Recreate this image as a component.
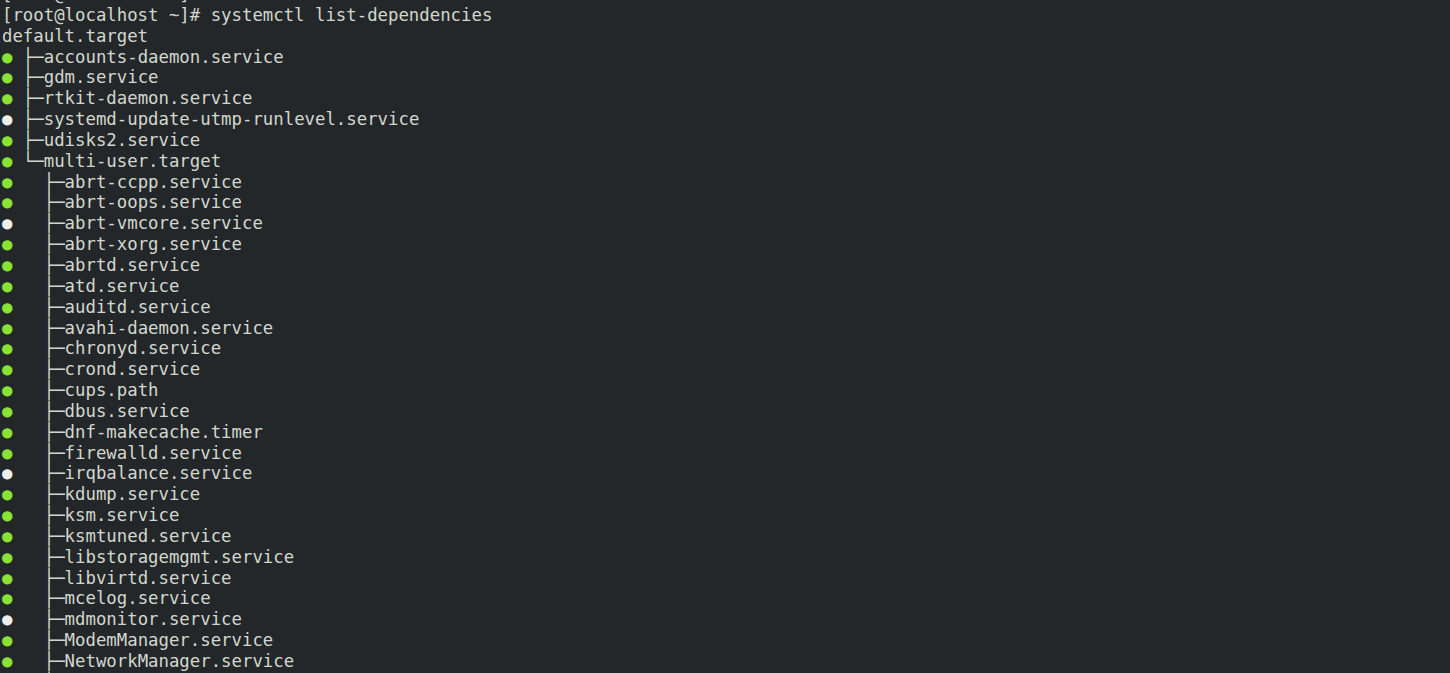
const units: { name: string; ok: boolean; depth: 1 | 2; last?: boolean }[] = [
  { name: "accounts-daemon.service", ok: true, depth: 1 },
  { name: "gdm.service", ok: true, depth: 1 },
  { name: "rtkit-daemon.service", ok: true, depth: 1 },
  { name: "systemd-update-utmp-runlevel.service", ok: false, depth: 1 },
  { name: "udisks2.service", ok: true, depth: 1 },
  { name: "multi-user.target", ok: true, depth: 1, last: true },
  { name: "abrt-ccpp.service", ok: true, depth: 2 },
  { name: "abrt-oops.service", ok: true, depth: 2 },
  { name: "abrt-vmcore.service", ok: false, depth: 2 },
  { name: "abrt-xorg.service", ok: true, depth: 2 },
  { name: "abrtd.service", ok: true, depth: 2 },
  { name: "atd.service", ok: true, depth: 2 },
  { name: "auditd.service", ok: true, depth: 2 },
  { name: "avahi-daemon.service", ok: true, depth: 2 },
  { name: "chronyd.service", ok: true, depth: 2 },
  { name: "crond.service", ok: true, depth: 2 },
  { name: "cups.path", ok: true, depth: 2 },
  { name: "dbus.service", ok: true, depth: 2 },
  { name: "dnf-makecache.timer", ok: true, depth: 2 },
  { name: "firewalld.service", ok: true, depth: 2 },
  { name: "irqbalance.service", ok: false, depth: 2 },
  { name: "kdump.service", ok: true, depth: 2 },
  { name: "ksm.service", ok: true, depth: 2 },
  { name: "ksmtuned.service", ok: true, depth: 2 },
  { name: "libstoragemgmt.service", ok: true, depth: 2 },
  { name: "libvirtd.service", ok: true, depth: 2 },
  { name: "mcelog.service", ok: true, depth: 2 },
  { name: "mdmonitor.service", ok: false, depth: 2 },
  { name: "ModemManager.service", ok: true, depth: 2 },
  { name: "NetworkManager.service", ok: true, depth: 2 },
  { name: "nfs-client.target", ok: true, depth: 2 },
];

export default function App() {
  return (
    <div className="w-[1450px] h-[673px] overflow-hidden bg-[#232729] text-[#d3d7cf]">
      <pre className="-mt-[16px] pl-[2px] font-['DejaVu_Sans_Mono',monospace] text-[17.33px] leading-[20.84px]">
        <div>[root@localhost ~]#</div>
        <div>[root@localhost ~]# systemctl list-dependencies</div>
        <div>default.target</div>
        {units.map((u) => (
          <div key={u.name}>
            <span className={u.ok ? "text-[#8ae234]" : "text-[#eeeeec]"}>●</span>
            {u.depth === 1 ? (u.last ? " └─" : " ├─") : "   ├─"}
            {u.name}
          </div>
        ))}
      </pre>
    </div>
  );
}
